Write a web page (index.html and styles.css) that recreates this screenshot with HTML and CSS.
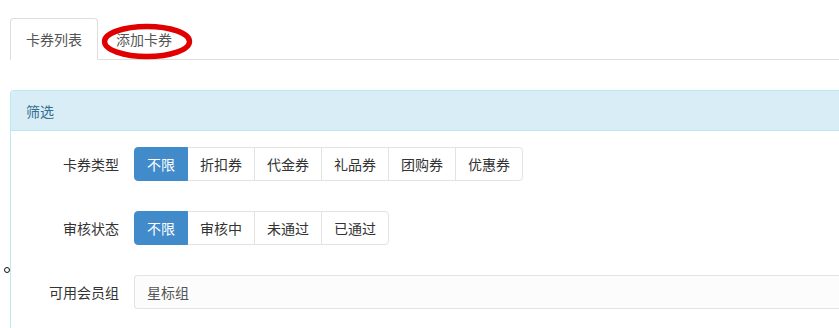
FILE: index.html
```html
<!DOCTYPE html>
<html lang="zh-CN">
<head>
<meta charset="utf-8">
<title>卡券</title>
<link rel="stylesheet" href="styles.css">
</head>
<body>
<div class="page">
  <ul class="tabs">
    <li class="tab active"><a>卡券列表</a></li>
    <li class="tab"><a>添加卡券</a>
      <svg class="mark" width="96" height="42" viewBox="0 0 96 42" aria-hidden="true">
        <ellipse cx="47" cy="19.5" rx="42.5" ry="15" fill="none" stroke="#e10000" stroke-width="5.4"/>
      </svg>
    </li>
  </ul>

  <div class="panel">
    <div class="panel-heading">筛选</div>
    <div class="panel-body">
      <span class="dot"></span>
      <div class="row">
        <label class="row-label">卡券类型</label>
        <div class="btn-group">
          <span class="btn active">不限</span>
          <span class="btn">折扣券</span>
          <span class="btn">代金券</span>
          <span class="btn">礼品券</span>
          <span class="btn">团购券</span>
          <span class="btn">优惠券</span>
        </div>
      </div>
      <div class="row">
        <label class="row-label">审核状态</label>
        <div class="btn-group">
          <span class="btn active">不限</span>
          <span class="btn">审核中</span>
          <span class="btn">未通过</span>
          <span class="btn">已通过</span>
        </div>
      </div>
      <div class="row">
        <label class="row-label">可用会员组</label>
        <div class="input">星标组</div>
      </div>
    </div>
  </div>
</div>
</body>
</html>
```

FILE: styles.css
```css
html, body {
  margin: 0;
  padding: 0;
  background: #fff;
  overflow: hidden;
}

body {
  font-family: "Noto Sans CJK SC", "Noto Sans", "Liberation Sans", sans-serif;
  font-size: 14px;
  line-height: 20px;
  color: #333;
}

.page {
  padding: 18px 0 0 10px;
}

.tabs {
  list-style: none;
  margin: 0;
  padding: 0;
  display: flex;
  border-bottom: 1px solid #ddd;
}

.tab {
  position: relative;
  margin-right: 2px;
  margin-bottom: -1px;
}

.tab a {
  display: block;
  padding: 10px 15px;
  color: #555;
  border: 1px solid transparent;
  border-radius: 4px 4px 0 0;
}

.tab.active a {
  border-color: #ddd;
  border-bottom-color: #fff;
  background: #fff;
}

.mark {
  position: absolute;
  left: 0;
  top: 4px;
  pointer-events: none;
}

.panel {
  margin-top: 30px;
  border: 1px solid #bce8f1;
  border-right: none;
  border-radius: 4px 0 0 4px;
}

.panel-heading {
  background: #d9edf7;
  color: #31708f;
  padding: 10px 15px 9px;
  border-bottom: 1px solid #bce8f1;
  border-radius: 3px 0 0 0;
}

.panel-body {
  position: relative;
  padding: 16px 0 20px 0;
  display: flex;
  flex-direction: column;
  gap: 30px;
}

.dot {
  position: absolute;
  left: -7px;
  top: 136px;
  width: 4px;
  height: 4px;
  border: 1px solid #111;
  border-radius: 50%;
  background: #fff;
}

.row {
  display: flex;
  align-items: center;
  height: 34px;
}

.row-label {
  width: 108px;
  margin-right: 15px;
  text-align: right;
  color: #333;
}

.btn-group {
  display: flex;
}

.btn {
  display: block;
  padding: 6px 12px;
  border: 1px solid #e3e3e3;
  background: #fff;
  color: #333;
  margin-left: -1px;
}

.btn:first-child {
  margin-left: 0;
  border-radius: 4px 0 0 4px;
}

.btn:last-child {
  border-radius: 0 4px 4px 0;
}

.btn.active {
  background: #428bca;
  border-color: #428bca;
  color: #fff;
  position: relative;
}

.input {
  flex: 1;
  height: 20px;
  padding: 6px 12px;
  border: 1px solid #e3e3e3;
  border-right: none;
  border-radius: 4px 0 0 4px;
  background: #fcfcfc;
  color: #555;
}
```
